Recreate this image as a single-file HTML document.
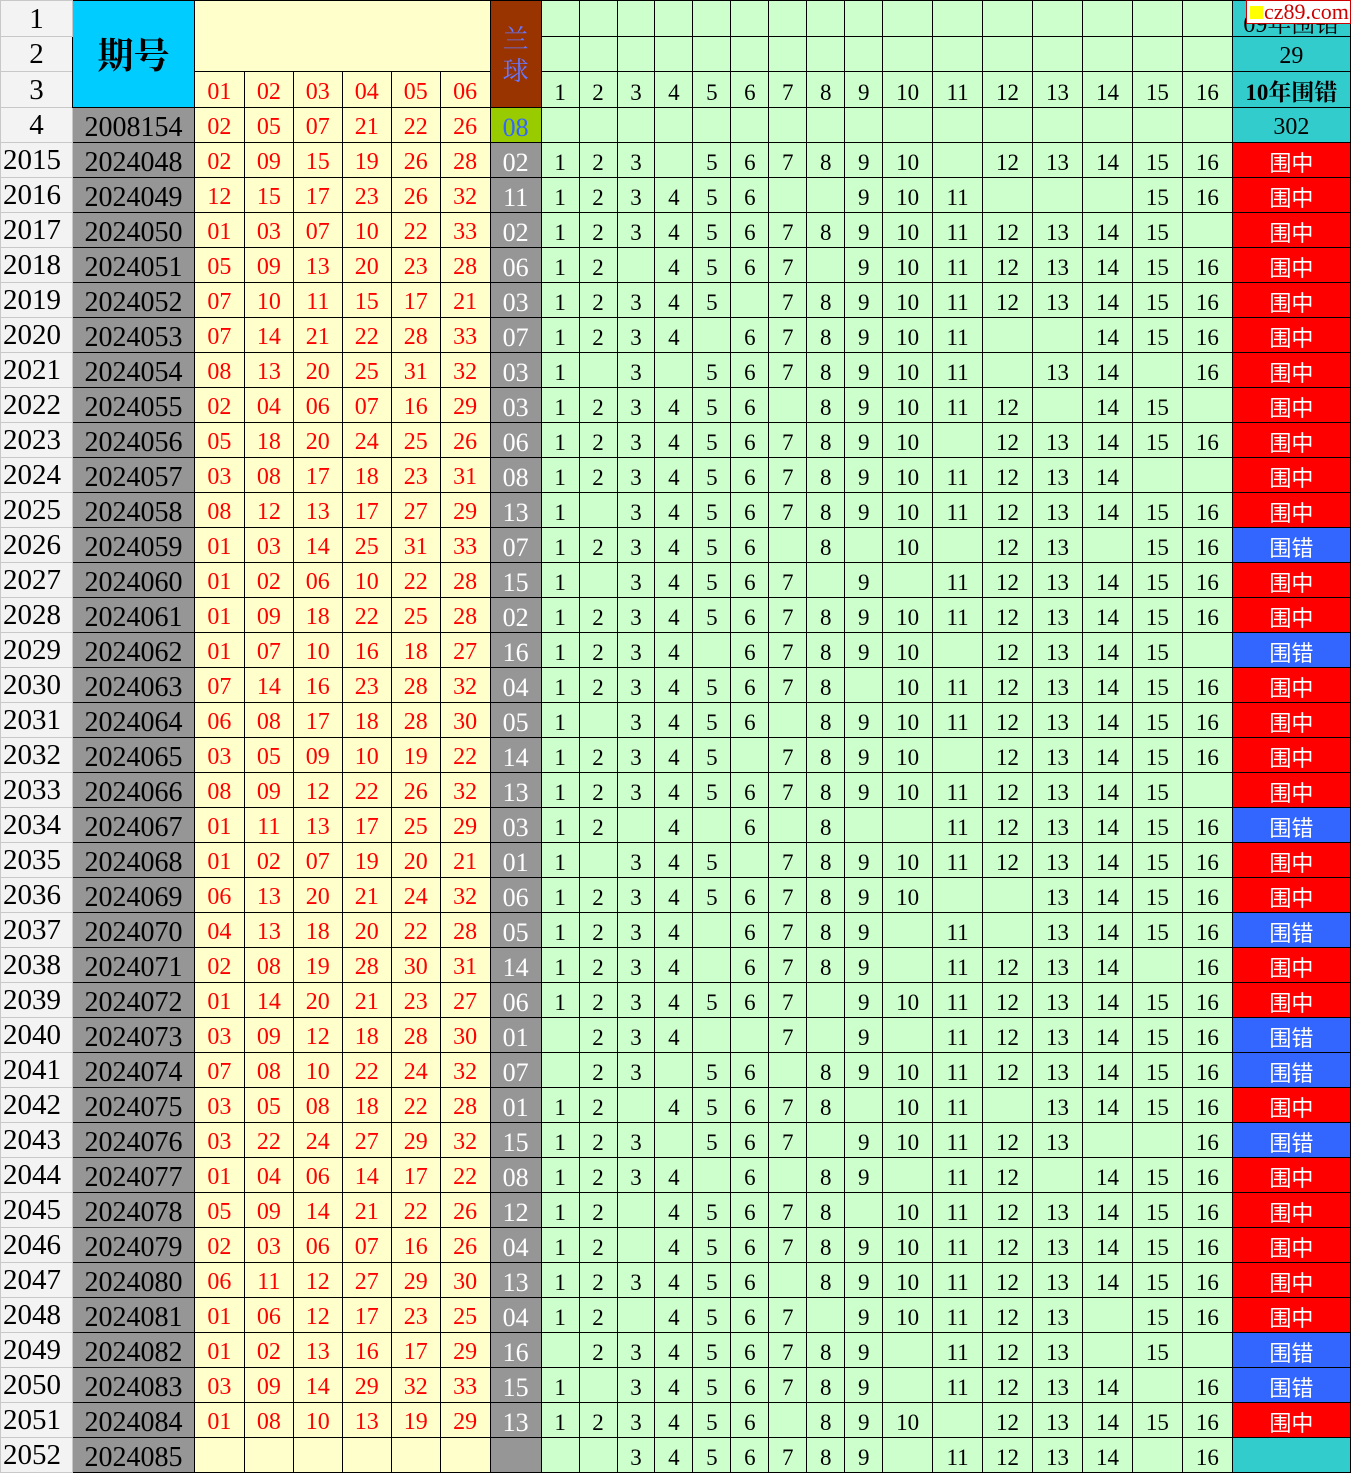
<!DOCTYPE html>
<html><head><meta charset="utf-8">
<style>
body{margin:0;background:#fff;width:1351px;height:1470px;overflow:hidden;position:relative}
table{border-collapse:collapse;table-layout:fixed;font-family:"Liberation Serif","Noto Serif CJK SC",serif;position:absolute;left:0;top:0}
td{border:1px solid #000;padding:0 0 1px 0;text-align:center;vertical-align:bottom;overflow:hidden;white-space:nowrap;font-size:23px;line-height:27px;color:#000}
tr{height:35px}
td.r{background:#f3f3f3;border-color:#c8c8c8;font-size:29px;line-height:31px;text-align:left;padding-left:2px}
td.rh{background:#f3f3f3;border-color:#c8c8c8;font-size:29px;line-height:31px;text-align:center}
tr.d td:nth-child(2){background:#969696;font-size:28px}
tr.d td:nth-child(n+3):nth-child(-n+8){background:#ffffcc;color:#f00;font-size:24px}
tr.d td:nth-child(9){background:#969696;color:#fff;font-size:26px}
tr.d td:nth-child(n+10):nth-child(-n+25){background:#ccffcc}
tr.d td:nth-child(26){color:#fff;font-family:"Noto Sans CJK SC",sans-serif;font-size:22px}
.z{background:#f00}.c{background:#3366ff}
.y{background:#ffffcc}.g{background:#ccffcc}.t{background:#33cccc;font-size:24px}
</style></head><body>
<table>
<colgroup><col style="width:72px"><col style="width:122px"><col style="width:50px"><col style="width:49px"><col style="width:49px"><col style="width:49px"><col style="width:49px"><col style="width:50px"><col style="width:51px">
<col style="width:38px"><col style="width:38px"><col style="width:38px"><col style="width:38px"><col style="width:38px"><col style="width:38px"><col style="width:38px"><col style="width:38px"><col style="width:38px">
<col style="width:50px"><col style="width:50px"><col style="width:50px"><col style="width:50px"><col style="width:50px"><col style="width:50px"><col style="width:50px"><col style="width:118px"></colgroup>
<tr style="height:36px"><td class="rh">1</td><td rowspan="3" style="background:#00ccff;font-family:'Noto Serif CJK SC',serif;font-size:36px;vertical-align:middle;font-weight:bold">期号</td><td colspan="6" rowspan="2" class="y"></td><td rowspan="3" style="background:#993300;color:#6677ff;font-family:'Noto Serif CJK SC',serif;font-size:26px;line-height:32px;vertical-align:middle;white-space:normal">兰<br>球</td>
<td class="g"></td><td class="g"></td><td class="g"></td><td class="g"></td><td class="g"></td><td class="g"></td><td class="g"></td><td class="g"></td><td class="g"></td><td class="g"></td><td class="g"></td><td class="g"></td><td class="g"></td><td class="g"></td><td class="g"></td><td class="g"></td><td class="t" style="font-family:'Liberation Serif','Noto Serif CJK SC',serif;line-height:20px">09年围错</td></tr>
<tr><td class="rh">2</td><td class="g"></td><td class="g"></td><td class="g"></td><td class="g"></td><td class="g"></td><td class="g"></td><td class="g"></td><td class="g"></td><td class="g"></td><td class="g"></td><td class="g"></td><td class="g"></td><td class="g"></td><td class="g"></td><td class="g"></td><td class="g"></td><td class="t">29</td></tr>
<tr style="height:36px"><td class="rh">3</td><td class="y" style="color:#f00;font-size:24px">01</td><td class="y" style="color:#f00;font-size:24px">02</td><td class="y" style="color:#f00;font-size:24px">03</td><td class="y" style="color:#f00;font-size:24px">04</td><td class="y" style="color:#f00;font-size:24px">05</td><td class="y" style="color:#f00;font-size:24px">06</td>
<td class="g">1</td><td class="g">2</td><td class="g">3</td><td class="g">4</td><td class="g">5</td><td class="g">6</td><td class="g">7</td><td class="g">8</td><td class="g">9</td><td class="g">10</td><td class="g">11</td><td class="g">12</td><td class="g">13</td><td class="g">14</td><td class="g">15</td><td class="g">16</td><td class="t" style="font-family:'Liberation Serif','Noto Serif CJK SC',serif;font-weight:bold;font-size:23px">10年围错</td></tr>
<tr><td class="rh">4</td><td style="background:#969696;font-size:28px">2008154</td><td class="y" style="color:#f00;font-size:24px">02</td><td class="y" style="color:#f00;font-size:24px">05</td><td class="y" style="color:#f00;font-size:24px">07</td><td class="y" style="color:#f00;font-size:24px">21</td><td class="y" style="color:#f00;font-size:24px">22</td><td class="y" style="color:#f00;font-size:24px">26</td><td style="background:#99cc00;color:#3366ff;font-size:26px">08</td>
<td class="g"></td><td class="g"></td><td class="g"></td><td class="g"></td><td class="g"></td><td class="g"></td><td class="g"></td><td class="g"></td><td class="g"></td><td class="g"></td><td class="g"></td><td class="g"></td><td class="g"></td><td class="g"></td><td class="g"></td><td class="g"></td><td class="t">302</td></tr>
<tr class="d"><td class="r">2015</td><td>2024048</td><td>02</td><td>09</td><td>15</td><td>19</td><td>26</td><td>28</td><td>02</td><td>1</td><td>2</td><td>3</td><td></td><td>5</td><td>6</td><td>7</td><td>8</td><td>9</td><td>10</td><td></td><td>12</td><td>13</td><td>14</td><td>15</td><td>16</td><td class="z">围中</td></tr>
<tr class="d"><td class="r">2016</td><td>2024049</td><td>12</td><td>15</td><td>17</td><td>23</td><td>26</td><td>32</td><td>11</td><td>1</td><td>2</td><td>3</td><td>4</td><td>5</td><td>6</td><td></td><td></td><td>9</td><td>10</td><td>11</td><td></td><td></td><td></td><td>15</td><td>16</td><td class="z">围中</td></tr>
<tr class="d"><td class="r">2017</td><td>2024050</td><td>01</td><td>03</td><td>07</td><td>10</td><td>22</td><td>33</td><td>02</td><td>1</td><td>2</td><td>3</td><td>4</td><td>5</td><td>6</td><td>7</td><td>8</td><td>9</td><td>10</td><td>11</td><td>12</td><td>13</td><td>14</td><td>15</td><td></td><td class="z">围中</td></tr>
<tr class="d"><td class="r">2018</td><td>2024051</td><td>05</td><td>09</td><td>13</td><td>20</td><td>23</td><td>28</td><td>06</td><td>1</td><td>2</td><td></td><td>4</td><td>5</td><td>6</td><td>7</td><td></td><td>9</td><td>10</td><td>11</td><td>12</td><td>13</td><td>14</td><td>15</td><td>16</td><td class="z">围中</td></tr>
<tr class="d"><td class="r">2019</td><td>2024052</td><td>07</td><td>10</td><td>11</td><td>15</td><td>17</td><td>21</td><td>03</td><td>1</td><td>2</td><td>3</td><td>4</td><td>5</td><td></td><td>7</td><td>8</td><td>9</td><td>10</td><td>11</td><td>12</td><td>13</td><td>14</td><td>15</td><td>16</td><td class="z">围中</td></tr>
<tr class="d"><td class="r">2020</td><td>2024053</td><td>07</td><td>14</td><td>21</td><td>22</td><td>28</td><td>33</td><td>07</td><td>1</td><td>2</td><td>3</td><td>4</td><td></td><td>6</td><td>7</td><td>8</td><td>9</td><td>10</td><td>11</td><td></td><td></td><td>14</td><td>15</td><td>16</td><td class="z">围中</td></tr>
<tr class="d"><td class="r">2021</td><td>2024054</td><td>08</td><td>13</td><td>20</td><td>25</td><td>31</td><td>32</td><td>03</td><td>1</td><td></td><td>3</td><td></td><td>5</td><td>6</td><td>7</td><td>8</td><td>9</td><td>10</td><td>11</td><td></td><td>13</td><td>14</td><td></td><td>16</td><td class="z">围中</td></tr>
<tr class="d"><td class="r">2022</td><td>2024055</td><td>02</td><td>04</td><td>06</td><td>07</td><td>16</td><td>29</td><td>03</td><td>1</td><td>2</td><td>3</td><td>4</td><td>5</td><td>6</td><td></td><td>8</td><td>9</td><td>10</td><td>11</td><td>12</td><td></td><td>14</td><td>15</td><td></td><td class="z">围中</td></tr>
<tr class="d"><td class="r">2023</td><td>2024056</td><td>05</td><td>18</td><td>20</td><td>24</td><td>25</td><td>26</td><td>06</td><td>1</td><td>2</td><td>3</td><td>4</td><td>5</td><td>6</td><td>7</td><td>8</td><td>9</td><td>10</td><td></td><td>12</td><td>13</td><td>14</td><td>15</td><td>16</td><td class="z">围中</td></tr>
<tr class="d"><td class="r">2024</td><td>2024057</td><td>03</td><td>08</td><td>17</td><td>18</td><td>23</td><td>31</td><td>08</td><td>1</td><td>2</td><td>3</td><td>4</td><td>5</td><td>6</td><td>7</td><td>8</td><td>9</td><td>10</td><td>11</td><td>12</td><td>13</td><td>14</td><td></td><td></td><td class="z">围中</td></tr>
<tr class="d"><td class="r">2025</td><td>2024058</td><td>08</td><td>12</td><td>13</td><td>17</td><td>27</td><td>29</td><td>13</td><td>1</td><td></td><td>3</td><td>4</td><td>5</td><td>6</td><td>7</td><td>8</td><td>9</td><td>10</td><td>11</td><td>12</td><td>13</td><td>14</td><td>15</td><td>16</td><td class="z">围中</td></tr>
<tr class="d"><td class="r">2026</td><td>2024059</td><td>01</td><td>03</td><td>14</td><td>25</td><td>31</td><td>33</td><td>07</td><td>1</td><td>2</td><td>3</td><td>4</td><td>5</td><td>6</td><td></td><td>8</td><td></td><td>10</td><td></td><td>12</td><td>13</td><td></td><td>15</td><td>16</td><td class="c">围错</td></tr>
<tr class="d"><td class="r">2027</td><td>2024060</td><td>01</td><td>02</td><td>06</td><td>10</td><td>22</td><td>28</td><td>15</td><td>1</td><td></td><td>3</td><td>4</td><td>5</td><td>6</td><td>7</td><td></td><td>9</td><td></td><td>11</td><td>12</td><td>13</td><td>14</td><td>15</td><td>16</td><td class="z">围中</td></tr>
<tr class="d"><td class="r">2028</td><td>2024061</td><td>01</td><td>09</td><td>18</td><td>22</td><td>25</td><td>28</td><td>02</td><td>1</td><td>2</td><td>3</td><td>4</td><td>5</td><td>6</td><td>7</td><td>8</td><td>9</td><td>10</td><td>11</td><td>12</td><td>13</td><td>14</td><td>15</td><td>16</td><td class="z">围中</td></tr>
<tr class="d"><td class="r">2029</td><td>2024062</td><td>01</td><td>07</td><td>10</td><td>16</td><td>18</td><td>27</td><td>16</td><td>1</td><td>2</td><td>3</td><td>4</td><td></td><td>6</td><td>7</td><td>8</td><td>9</td><td>10</td><td></td><td>12</td><td>13</td><td>14</td><td>15</td><td></td><td class="c">围错</td></tr>
<tr class="d"><td class="r">2030</td><td>2024063</td><td>07</td><td>14</td><td>16</td><td>23</td><td>28</td><td>32</td><td>04</td><td>1</td><td>2</td><td>3</td><td>4</td><td>5</td><td>6</td><td>7</td><td>8</td><td></td><td>10</td><td>11</td><td>12</td><td>13</td><td>14</td><td>15</td><td>16</td><td class="z">围中</td></tr>
<tr class="d"><td class="r">2031</td><td>2024064</td><td>06</td><td>08</td><td>17</td><td>18</td><td>28</td><td>30</td><td>05</td><td>1</td><td></td><td>3</td><td>4</td><td>5</td><td>6</td><td></td><td>8</td><td>9</td><td>10</td><td>11</td><td>12</td><td>13</td><td>14</td><td>15</td><td>16</td><td class="z">围中</td></tr>
<tr class="d"><td class="r">2032</td><td>2024065</td><td>03</td><td>05</td><td>09</td><td>10</td><td>19</td><td>22</td><td>14</td><td>1</td><td>2</td><td>3</td><td>4</td><td>5</td><td></td><td>7</td><td>8</td><td>9</td><td>10</td><td></td><td>12</td><td>13</td><td>14</td><td>15</td><td>16</td><td class="z">围中</td></tr>
<tr class="d"><td class="r">2033</td><td>2024066</td><td>08</td><td>09</td><td>12</td><td>22</td><td>26</td><td>32</td><td>13</td><td>1</td><td>2</td><td>3</td><td>4</td><td>5</td><td>6</td><td>7</td><td>8</td><td>9</td><td>10</td><td>11</td><td>12</td><td>13</td><td>14</td><td>15</td><td></td><td class="z">围中</td></tr>
<tr class="d"><td class="r">2034</td><td>2024067</td><td>01</td><td>11</td><td>13</td><td>17</td><td>25</td><td>29</td><td>03</td><td>1</td><td>2</td><td></td><td>4</td><td></td><td>6</td><td></td><td>8</td><td></td><td></td><td>11</td><td>12</td><td>13</td><td>14</td><td>15</td><td>16</td><td class="c">围错</td></tr>
<tr class="d"><td class="r">2035</td><td>2024068</td><td>01</td><td>02</td><td>07</td><td>19</td><td>20</td><td>21</td><td>01</td><td>1</td><td></td><td>3</td><td>4</td><td>5</td><td></td><td>7</td><td>8</td><td>9</td><td>10</td><td>11</td><td>12</td><td>13</td><td>14</td><td>15</td><td>16</td><td class="z">围中</td></tr>
<tr class="d"><td class="r">2036</td><td>2024069</td><td>06</td><td>13</td><td>20</td><td>21</td><td>24</td><td>32</td><td>06</td><td>1</td><td>2</td><td>3</td><td>4</td><td>5</td><td>6</td><td>7</td><td>8</td><td>9</td><td>10</td><td></td><td></td><td>13</td><td>14</td><td>15</td><td>16</td><td class="z">围中</td></tr>
<tr class="d"><td class="r">2037</td><td>2024070</td><td>04</td><td>13</td><td>18</td><td>20</td><td>22</td><td>28</td><td>05</td><td>1</td><td>2</td><td>3</td><td>4</td><td></td><td>6</td><td>7</td><td>8</td><td>9</td><td></td><td>11</td><td></td><td>13</td><td>14</td><td>15</td><td>16</td><td class="c">围错</td></tr>
<tr class="d"><td class="r">2038</td><td>2024071</td><td>02</td><td>08</td><td>19</td><td>28</td><td>30</td><td>31</td><td>14</td><td>1</td><td>2</td><td>3</td><td>4</td><td></td><td>6</td><td>7</td><td>8</td><td>9</td><td></td><td>11</td><td>12</td><td>13</td><td>14</td><td></td><td>16</td><td class="z">围中</td></tr>
<tr class="d"><td class="r">2039</td><td>2024072</td><td>01</td><td>14</td><td>20</td><td>21</td><td>23</td><td>27</td><td>06</td><td>1</td><td>2</td><td>3</td><td>4</td><td>5</td><td>6</td><td>7</td><td></td><td>9</td><td>10</td><td>11</td><td>12</td><td>13</td><td>14</td><td>15</td><td>16</td><td class="z">围中</td></tr>
<tr class="d"><td class="r">2040</td><td>2024073</td><td>03</td><td>09</td><td>12</td><td>18</td><td>28</td><td>30</td><td>01</td><td></td><td>2</td><td>3</td><td>4</td><td></td><td></td><td>7</td><td></td><td>9</td><td></td><td>11</td><td>12</td><td>13</td><td>14</td><td>15</td><td>16</td><td class="c">围错</td></tr>
<tr class="d"><td class="r">2041</td><td>2024074</td><td>07</td><td>08</td><td>10</td><td>22</td><td>24</td><td>32</td><td>07</td><td></td><td>2</td><td>3</td><td></td><td>5</td><td>6</td><td></td><td>8</td><td>9</td><td>10</td><td>11</td><td>12</td><td>13</td><td>14</td><td>15</td><td>16</td><td class="c">围错</td></tr>
<tr class="d"><td class="r">2042</td><td>2024075</td><td>03</td><td>05</td><td>08</td><td>18</td><td>22</td><td>28</td><td>01</td><td>1</td><td>2</td><td></td><td>4</td><td>5</td><td>6</td><td>7</td><td>8</td><td></td><td>10</td><td>11</td><td></td><td>13</td><td>14</td><td>15</td><td>16</td><td class="z">围中</td></tr>
<tr class="d"><td class="r">2043</td><td>2024076</td><td>03</td><td>22</td><td>24</td><td>27</td><td>29</td><td>32</td><td>15</td><td>1</td><td>2</td><td>3</td><td></td><td>5</td><td>6</td><td>7</td><td></td><td>9</td><td>10</td><td>11</td><td>12</td><td>13</td><td></td><td></td><td>16</td><td class="c">围错</td></tr>
<tr class="d"><td class="r">2044</td><td>2024077</td><td>01</td><td>04</td><td>06</td><td>14</td><td>17</td><td>22</td><td>08</td><td>1</td><td>2</td><td>3</td><td>4</td><td></td><td>6</td><td></td><td>8</td><td>9</td><td></td><td>11</td><td>12</td><td></td><td>14</td><td>15</td><td>16</td><td class="z">围中</td></tr>
<tr class="d"><td class="r">2045</td><td>2024078</td><td>05</td><td>09</td><td>14</td><td>21</td><td>22</td><td>26</td><td>12</td><td>1</td><td>2</td><td></td><td>4</td><td>5</td><td>6</td><td>7</td><td>8</td><td></td><td>10</td><td>11</td><td>12</td><td>13</td><td>14</td><td>15</td><td>16</td><td class="z">围中</td></tr>
<tr class="d"><td class="r">2046</td><td>2024079</td><td>02</td><td>03</td><td>06</td><td>07</td><td>16</td><td>26</td><td>04</td><td>1</td><td>2</td><td></td><td>4</td><td>5</td><td>6</td><td>7</td><td>8</td><td>9</td><td>10</td><td>11</td><td>12</td><td>13</td><td>14</td><td>15</td><td>16</td><td class="z">围中</td></tr>
<tr class="d"><td class="r">2047</td><td>2024080</td><td>06</td><td>11</td><td>12</td><td>27</td><td>29</td><td>30</td><td>13</td><td>1</td><td>2</td><td>3</td><td>4</td><td>5</td><td>6</td><td></td><td>8</td><td>9</td><td>10</td><td>11</td><td>12</td><td>13</td><td>14</td><td>15</td><td>16</td><td class="z">围中</td></tr>
<tr class="d"><td class="r">2048</td><td>2024081</td><td>01</td><td>06</td><td>12</td><td>17</td><td>23</td><td>25</td><td>04</td><td>1</td><td>2</td><td></td><td>4</td><td>5</td><td>6</td><td>7</td><td></td><td>9</td><td>10</td><td>11</td><td>12</td><td>13</td><td></td><td>15</td><td>16</td><td class="z">围中</td></tr>
<tr class="d"><td class="r">2049</td><td>2024082</td><td>01</td><td>02</td><td>13</td><td>16</td><td>17</td><td>29</td><td>16</td><td></td><td>2</td><td>3</td><td>4</td><td>5</td><td>6</td><td>7</td><td>8</td><td>9</td><td></td><td>11</td><td>12</td><td>13</td><td></td><td>15</td><td></td><td class="c">围错</td></tr>
<tr class="d"><td class="r">2050</td><td>2024083</td><td>03</td><td>09</td><td>14</td><td>29</td><td>32</td><td>33</td><td>15</td><td>1</td><td></td><td>3</td><td>4</td><td>5</td><td>6</td><td>7</td><td>8</td><td>9</td><td></td><td>11</td><td>12</td><td>13</td><td>14</td><td></td><td>16</td><td class="c">围错</td></tr>
<tr class="d"><td class="r">2051</td><td>2024084</td><td>01</td><td>08</td><td>10</td><td>13</td><td>19</td><td>29</td><td>13</td><td>1</td><td>2</td><td>3</td><td>4</td><td>5</td><td>6</td><td></td><td>8</td><td>9</td><td>10</td><td></td><td>12</td><td>13</td><td>14</td><td>15</td><td>16</td><td class="z">围中</td></tr>
<tr class="d"><td class="r">2052</td><td>2024085</td><td></td><td></td><td></td><td></td><td></td><td></td><td></td><td></td><td></td><td>3</td><td>4</td><td>5</td><td>6</td><td>7</td><td>8</td><td>9</td><td></td><td>11</td><td>12</td><td>13</td><td>14</td><td></td><td>16</td><td style="background:#33cccc"></td></tr>
</table>
<div style="position:absolute;left:1246px;top:0px;width:103px;height:22px;background:#fff;border:1px solid #c00;font-family:'Liberation Serif',serif;font-size:22px;line-height:22px;color:#c00;white-space:nowrap;overflow:hidden"><span style="display:inline-block;width:13px;height:13px;background:#ff0;margin:0 1px 0 3px"></span>cz89.com</div>
</body></html>
